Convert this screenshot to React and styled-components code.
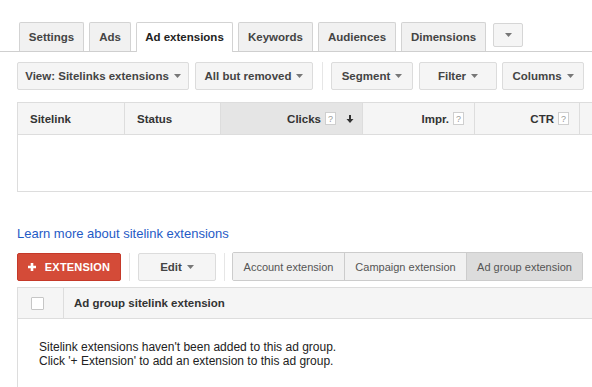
import React from "react";
import styled, { createGlobalStyle } from "styled-components";

const GlobalStyle = createGlobalStyle`
  body {
    margin: 0;
    background: #fff;
    font-family: "Liberation Sans", Arial, sans-serif;
    color: #222;
  }
`;

const Page = styled.div`
  width: 592px;
  height: 387px;
  overflow: hidden;
`;

// tabs
const TabBar = styled.div`
  display: flex;
  align-items: flex-end;
  gap: 5px;
  height: 29px;
  padding: 22px 0 0 19px;
  border-bottom: 1px solid #cfcfcf;
`;

const Tab = styled.div`
  box-sizing: border-box;
  width: ${(p) => p.w}px;
  height: ${(p) => (p.active ? 30 : 29)}px;
  margin-bottom: ${(p) => (p.active ? -1 : 0)}px;
  display: flex;
  align-items: center;
  justify-content: center;
  border: 1px solid #d3d3d3;
  border-bottom: none;
  border-radius: 2px 2px 0 0;
  background: ${(p) => (p.active ? "#fff" : "#f1f1f1")};
  color: ${(p) => (p.active ? "#222" : "#444")};
  font-size: 11.5px;
  font-weight: bold;
  padding-bottom: ${(p) => (p.active ? 1 : 0)}px;
`;

const MoreTab = styled.div`
  box-sizing: border-box;
  width: 30px;
  height: 24px;
  margin: 0 0 4px 2px;
  display: flex;
  align-items: center;
  justify-content: center;
  border: 1px solid #d6d6d6;
  border-radius: 2px;
  background: #f5f5f5;
`;

// toolbars
const Toolbar = styled.div`
  display: flex;
  align-items: center;
  gap: ${(p) => p.gap}px;
  padding: ${(p) => p.top}px 0 0 17px;
`;

const Button = styled.div`
  box-sizing: border-box;
  width: ${(p) => p.w}px;
  height: 28px;
  display: flex;
  align-items: center;
  justify-content: center;
  gap: 5px;
  border: 1px solid #dcdcdc;
  border-radius: 2px;
  background: #f5f5f5;
  color: #444;
  font-size: 11.5px;
  font-weight: bold;
`;

const RedButton = styled.div`
  box-sizing: border-box;
  width: 104px;
  height: 28px;
  display: flex;
  align-items: center;
  justify-content: center;
  gap: 9px;
  border: 1px solid #c53929;
  border-radius: 2px;
  background: #d44b38;
  color: #fff;
  font-size: 11px;
  font-weight: bold;
  letter-spacing: 0.2px;
`;

const Divider = styled.div`
  width: 1px;
  height: 28px;
  background: #e6e6e6;
  margin: ${(p) => p.m || 0};
`;

const Segmented = styled.div`
  display: flex;
  height: 29px;
  border: 1px solid #cccccc;
  border-radius: 2px;
  box-sizing: border-box;
  overflow: hidden;
`;

const Segment = styled.div`
  box-sizing: border-box;
  width: ${(p) => p.w}px;
  display: flex;
  align-items: center;
  justify-content: center;
  background: ${(p) => (p.selected ? "#dcdcdc" : "#f1f1f1")};
  color: #555;
  font-size: 11px;
  & + & {
    border-left: 1px solid #cccccc;
  }
`;

// tables
const Table = styled.div`
  width: 640px;
  margin: ${(p) => p.top}px 0 0 17px;
  border: 1px solid #dddddd;
  border-right: none;
  border-bottom: ${(p) => (p.open ? "none" : "1px solid #dddddd")};
`;

const HeadRow = styled.div`
  display: flex;
  height: ${(p) => p.h}px;
  background: #f5f5f5;
  border-bottom: 1px solid #dddddd;
`;

const HeadCell = styled.div`
  box-sizing: border-box;
  width: ${(p) => p.w}px;
  flex: none;
  display: flex;
  align-items: center;
  justify-content: ${(p) => (p.right ? "flex-end" : "flex-start")};
  gap: 4px;
  padding: ${(p) => p.pad || "0 12px"};
  border-right: ${(p) => (p.last ? "none" : "1px solid #dddddd")};
  background: ${(p) => (p.sorted ? "#e5e5e5" : "transparent")};
  color: #333;
  font-size: 11.5px;
  font-weight: bold;
`;

const Help = styled.span`
  box-sizing: border-box;
  width: 11px;
  height: 13px;
  display: inline-flex;
  align-items: center;
  justify-content: center;
  border: 1px solid #cfcfcf;
  background: #fff;
  color: #999;
  font-size: 9px;
  font-weight: normal;
`;

const EmptyBody = styled.div`
  height: 56px;
`;

const Checkbox = styled.div`
  box-sizing: border-box;
  width: 13px;
  height: 13px;
  margin-left: 13px;
  border: 1px solid #c6c6c6;
  border-radius: 1px;
  background: #fff;
`;

const Message = styled.div`
  padding: 21px 0 40px 21px;
  font-size: 12px;
  line-height: 14px;
  color: #222;
`;

const Link = styled.a`
  display: block;
  margin: 34px 0 0 17px;
  font-size: 13px;
  line-height: 15px;
  color: #1f5bc6;
  text-decoration: none;
`;

const Caret = () => (
  <svg width="7" height="4" viewBox="0 0 7 4">
    <path d="M0 0h7L3.5 4z" fill="#777" />
  </svg>
);

const SortArrow = () => (
  <svg width="8" height="8" viewBox="0 0 8 8" style={{ marginLeft: 6 }}>
    <path d="M4 0v6" stroke="#333" strokeWidth="2" />
    <path d="M0.5 4h7L4 8z" fill="#333" />
  </svg>
);

const Plus = () => (
  <svg width="8" height="8" viewBox="0 0 8 8">
    <path d="M4 0v8M0 4h8" stroke="#fff" strokeWidth="2.6" />
  </svg>
);

const tabs = [
  ["Settings", 65],
  ["Ads", 42],
  ["Ad extensions", 97, true],
  ["Keywords", 75],
  ["Audiences", 78],
  ["Dimensions", 85],
];

export default function App() {
  return (
    <Page>
      <GlobalStyle />
      <TabBar>
        {tabs.map(([label, w, active]) => (
          <Tab key={label} w={w} active={active}>
            {label}
          </Tab>
        ))}
        <MoreTab>
          <Caret />
        </MoreTab>
      </TabBar>

      <Toolbar top={10} gap={6}>
        <Button w={172}>
          View: Sitelinks extensions <Caret />
        </Button>
        <Button w={118}>
          All but removed <Caret />
        </Button>
        <Divider m="0 2px 0 3px" />
        <Button w={82}>
          Segment <Caret />
        </Button>
        <Button w={78}>
          Filter <Caret />
        </Button>
        <Button w={82} style={{ marginLeft: -1 }}>
          Columns <Caret />
        </Button>
      </Toolbar>

      <Table top={12}>
        <HeadRow h={31}>
          <HeadCell w={107}>Sitelink</HeadCell>
          <HeadCell w={96}>Status</HeadCell>
          <HeadCell w={142} right sorted pad="0 8px 0 12px">
            Clicks <Help>?</Help>
            <SortArrow />
          </HeadCell>
          <HeadCell w={112} right pad="0 10px 0 12px">
            Impr. <Help>?</Help>
          </HeadCell>
          <HeadCell w={105} right pad="0 10px 0 12px">
            CTR <Help>?</Help>
          </HeadCell>
          <HeadCell w={160} last />
        </HeadRow>
        <EmptyBody />
      </Table>

      <Link href="#">Learn more about sitelink extensions</Link>

      <Toolbar top={11} gap={8}>
        <RedButton>
          <Plus />
          EXTENSION
        </RedButton>
        <Divider />
        <Button w={78}>
          Edit <Caret />
        </Button>
        <Divider m="0 -1px 0 0" />
        <Segmented>
          <Segment w={111}>Account extension</Segment>
          <Segment w={122}>Campaign extension</Segment>
          <Segment w={116} selected>
            Ad group extension
          </Segment>
        </Segmented>
      </Toolbar>

      <Table top={6} open>
        <HeadRow h={30}>
          <HeadCell w={46} pad="0">
            <Checkbox />
          </HeadCell>
          <HeadCell w={560} pad="0 10px" last>
            Ad group sitelink extension
          </HeadCell>
        </HeadRow>
        <Message>
          Sitelink extensions haven't been added to this ad group.
          <br />
          Click '+ Extension' to add an extension to this ad group.
        </Message>
      </Table>
    </Page>
  );
}
